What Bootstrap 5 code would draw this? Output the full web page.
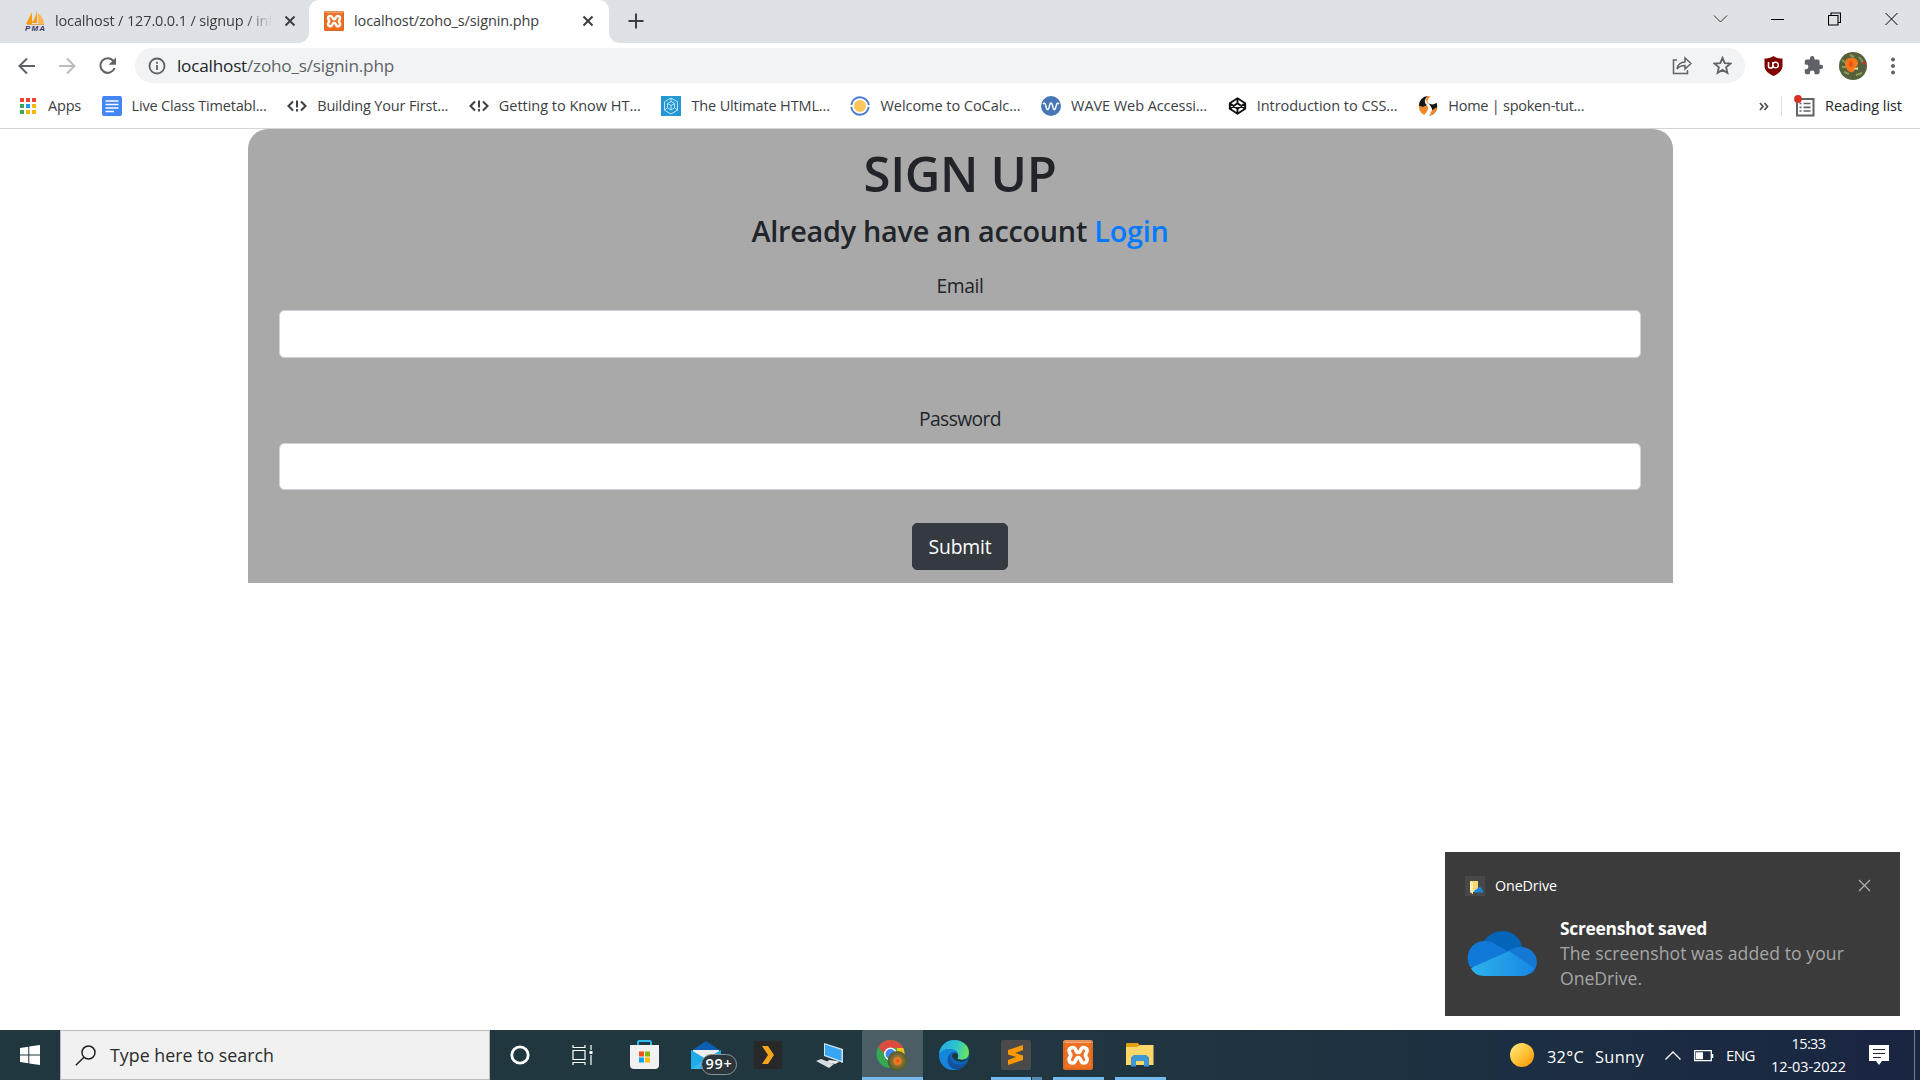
<!DOCTYPE html>
<html lang="en">
<head>
<meta charset="utf-8">
<title>localhost/zoho_s/signin.php</title>
<link href="https://cdn.jsdelivr.net/npm/bootstrap@5.3.0/dist/css/bootstrap.min.css" rel="stylesheet">
<style>
body{width:1920px;height:1080px;overflow:hidden;font-family:"Open Sans","Noto Sans",sans-serif;color:#212529;background:#fff;margin:0}
svg{display:block;flex:none}
[data-w]{display:inline-block;white-space:nowrap;flex:none}
.tabstrip{height:43px;background:#dee1e6;font-size:14.5px;color:#3c4043}
.tab-idle{width:309px;padding:0 0 2px 25px}
.tab-idle .title{width:218px;overflow:hidden;-webkit-mask-image:linear-gradient(90deg,#000 190px,transparent 218px);mask-image:linear-gradient(90deg,#000 190px,transparent 218px)}
.tab-live{width:300px;background:#fff;border-radius:10px 10px 0 0;padding:0 0 2px 15px}
.tab-live::before,.tab-live::after{content:"";position:absolute;bottom:0;width:10px;height:10px}
.tab-live::before{left:-10px;background:radial-gradient(circle at 0 0,transparent 9.5px,#fff 10px)}
.tab-live::after{right:-10px;background:radial-gradient(circle at 100% 0,transparent 9.5px,#fff 10px)}
.new-tab{margin:0 0 1px 17px}
.winbtns{padding:0 0 5px 0}
.winbtn{width:57px}
.toolbar{height:47px;padding:0 0 2px 7px}
.navslot{width:40px}
.omnibox{height:35px;width:1610px;border-radius:18px;background:#f1f3f4;font-size:17.2px;color:#5f6368;padding:0 3px 0 13px}
.bookmarks{height:39px;border-bottom:1px solid #d3d5d8;font-size:14.5px;color:#3c4043;padding:0 18px 6px}
.bm{gap:10px;margin-right:20.6px}
.signup{width:1425px;height:454px;background:#a9a9a9;border-radius:20px 20px 0 0;padding:0 32px 0 31px;margin-left:248px;font-size:19.3px}
.signup h1{font-size:49px;font-weight:600;line-height:60px;margin:14px 0 10px}
.signup h4{font-size:28.8px;font-weight:600;line-height:36px;margin:0 0 22px}
.signup h4 a{color:#007bff;text-decoration:none}
.signup label{line-height:30px;margin-bottom:9px}
.signup .form-control{height:48px;border:1px solid #ced4da;border-radius:5px}
.signup .form-control[type=password]{height:47px}
.signup .btn{width:96px;height:47px;background:#343a40;border-color:#343a40;color:#fff;border-radius:5px;font-size:19.3px;padding:1px 0 0}
.toast-box{left:1445px;top:852px;width:455px;height:164px;background:#3b3b3b;padding:23px 29px 0 20px;color:#fff}
.toast-body-text{font-size:17.6px;line-height:25px;color:#a6a6a6}
.taskbar{left:0;top:1030px;width:1920px;height:50px;background:linear-gradient(90deg,#20373f 0,#21373f 45%,#203540 62%,#1c2e42 80%,#1a2541 100%);color:#fff}
.searchbox{width:430px;background:#f1f1f1;border:1px solid #bbb;color:#2b2b2b;font-size:17.8px;padding-left:14px;gap:15px}
.app{width:62px;height:50px;padding-right:2px}
.app.on{background:#4b5e66;width:61px;margin-right:1px;padding-left:1px}
.bar{position:absolute;bottom:0;height:3px;background:#76b9ed;left:5px;width:51px}
.app.on .bar{left:0;width:61px}
.mailbadge{left:25px;top:24px;width:36px;height:21px;border:1px solid #8b9499;border-radius:11px;background:#2b363b;font-size:14.5px;line-height:18px;font-weight:600}
.tray{font-size:15px}
</style>
<script src="https://cdn.jsdelivr.net/npm/bootstrap@5.3.0/dist/js/bootstrap.bundle.min.js"></script>
</head>
<body>
<svg width="0" height="0" class="position-absolute">
<defs>
<linearGradient id="sun" x1="0" y1="0" x2="1" y2="1"><stop offset="0" stop-color="#ffec86"/><stop offset=".5" stop-color="#ffc538"/><stop offset="1" stop-color="#ff8c00"/></linearGradient>
<linearGradient id="cl" x1="0" x2="1"><stop offset="0" stop-color="#2eb2ee"/><stop offset="1" stop-color="#1689e3"/></linearGradient>
<linearGradient id="eg" x1="0" y1=".3" x2="1" y2=".5"><stop offset="0" stop-color="#2aa8e0"/><stop offset=".55" stop-color="#2cc5cf"/><stop offset="1" stop-color="#6be457"/></linearGradient>
<radialGradient id="flower"><stop offset="0" stop-color="#e8491d"/><stop offset=".3" stop-color="#f4811c"/><stop offset=".5" stop-color="#8a7034"/><stop offset="1" stop-color="#4c5a2e"/></radialGradient>
<clipPath id="disc"><ellipse cx="10" cy="10" rx="9.300" ry="10"/></clipPath>
<symbol id="xampp" viewBox="0 0 30 30"><rect width="30" height="30" rx="2.500" fill="#ed7023"/><path d="M0 3a3 3 0 0 1 3-3h24a3 3 0 0 1 3 3z" fill="#f7a878"/><path d="M1 1h28v28H1z" fill="none" stroke="#b85a1d" stroke-width="1" opacity=".6"/><path d="M10 7.500c-3 0-4.200 2-3.700 4 .3 1.500 1.500 2.300 1.500 3.700s-1.400 2.200-1.700 4c-.4 2.400 1.400 4 3.700 3.800 3.500-.2 2.200-5.500 5.400-5.500s2 5.300 5.200 5.500c2.300.2 4.100-1.600 3.700-3.800-.3-1.800-1.700-2.600-1.700-4s1.200-2.200 1.500-3.700c.5-2-.7-4-3.500-4-3.500 0-2 5-5.200 5S13.500 7.500 10 7.500z" fill="none" stroke="#fff" stroke-width="3.700"/></symbol>
<symbol id="code" viewBox="0 0 20 16"><path d="M6 3.500 1.500 8 6 12.500M14 3.500 18.500 8 14 12.500" fill="none" stroke="#3f4247" stroke-width="2.100"/><path d="M10 2.500v7M10 11v2.400" stroke="#3f4247" stroke-width="2"/></symbol>
<symbol id="cross" viewBox="0 0 12 12"><path d="M1.500 1.500l9 9M10.500 1.500l-9 9" stroke="#3c4043" stroke-width="2" fill="none"/></symbol>
</defs>
</svg>

<header>
<div class="tabstrip d-flex">
  <div class="tab-idle d-flex align-items-center">
    <svg width="21" height="21" viewBox="0 0 21 21"><path d="M7 2v12H1zM12 0v13H6.500C10 9 11 5 12 0z" fill="#f89c0e"/><path d="M13 3c4 3 6 7 6 11h-6z" fill="#fbb858"/><path d="M2 14.500h17" stroke="#e1a65a"/><text x="0" y="20.500" font-size="8" font-weight="bold" font-style="italic" fill="#3b3968" textLength="20" font-family="Liberation Sans">PMA</text></svg>
    <div class="title" style="margin-left:9px"><span data-w="218">localhost / 127.0.0.1 / signup / inf</span></div>
    <svg class="ms-auto" width="12" height="12" style="margin-right:13px"><use href="#cross"/></svg>
  </div>
  <div class="tab-live d-flex align-items-center position-relative">
    <svg width="20" height="20"><use href="#xampp"/></svg>
    <span data-w="185" style="margin-left:10px">localhost/zoho_s/signin.php</span>
    <svg class="ms-auto" width="12" height="12" style="margin-right:15px"><use href="#cross"/></svg>
  </div>
  <svg class="new-tab align-self-center" width="20" height="16" viewBox="0 0 16 16"><path d="M8 .5v15M.5 8h15" stroke="#3c4043" stroke-width="2"/></svg>
  <div class="winbtns d-flex align-items-center ms-auto">
    <div class="winbtn"><svg class="mx-auto" width="15" height="14" viewBox="0 0 15 14"><path d="M1 3.500l6.500 6.500L14 3.500" fill="none" stroke="#333"/></svg></div>
    <div class="winbtn"><svg class="mx-auto" width="13" height="14"><path d="M0 7.500h13" stroke="#000"/></svg></div>
    <div class="winbtn"><svg class="mx-auto" width="13" height="14"><path d="M.5 3.500h9.500v9.500H.5zM3 3.500V1h9.500v9.500H10" fill="none" stroke="#000" stroke-width="1.100"/></svg></div>
    <div class="winbtn"><svg class="mx-auto" width="13" height="14"><path d="M.5 1l12 12M12.500 1l-12 12" stroke="#000"/></svg></div>
  </div>
</div>
<div class="toolbar d-flex align-items-center">
  <div class="navslot"><svg class="mx-auto" width="18" height="18" viewBox="0 0 18 18" fill="none" stroke="#5f6368" stroke-width="2"><path d="M17 9H2M9 1.500 1.500 9 9 16.500"/></svg></div>
  <div class="navslot"><svg class="mx-auto" width="18" height="18" viewBox="0 0 18 18" fill="none" stroke="#babcbe" stroke-width="2"><path d="M1 9h15M9 1.500 16.500 9 9 16.500"/></svg></div>
  <div class="navslot"><svg class="mx-auto" width="19" height="18" viewBox="0 0 19 18"><path d="M15.500 4A7.300 7.300 0 1 0 16.600 11" fill="none" stroke="#5f6368" stroke-width="2.100"/><path d="M18 .5v7.300h-7.300z" fill="#5f6368"/></svg></div>
  <div class="omnibox d-flex align-items-center" style="margin-left:8px">
    <svg width="18" height="18" fill="none" stroke="#5f6368" stroke-width="1.800"><circle cx="9" cy="9" r="7.500"/><path d="M9 8v5M9 4.800v2"/></svg>
    <span data-w="217" style="margin-left:11px"><span class="text-dark">localhost</span>/zoho_s/signin.php</span>
    <div class="navslot ms-auto"><svg class="mx-auto" width="20" height="19" viewBox="0 0 20 19" fill="none" stroke="#5f6368" stroke-width="1.500"><path d="M5 4H1.500v13.500h14V14"/><path d="M5 13C6 8 9 6 13 6V2l6 5.500-6 5.500V9.500c-4 0-6 1-8 3.500z"/></svg></div>
    <div class="navslot"><svg class="mx-auto" width="19" height="19" viewBox="0 0 19 19"><path d="M9.500 1.800l2.200 5.300 5.700.5-4.300 3.700 1.300 5.600-4.900-3-4.900 3 1.300-5.600L1.600 7.600l5.700-.5z" fill="none" stroke="#5f6368" stroke-width="1.800"/></svg></div>
  </div>
  <div class="navslot ms-2"><svg class="mx-auto" width="19" height="20" viewBox="0 0 19 20"><path d="M9.500 0c3 2 6 2.600 9 2.600V10c0 5-5 8-9 10C5.500 18 .5 15 .5 10V2.600C3.500 2.600 6.500 2 9.500 0z" fill="#800000"/><path d="M4.500 6v4.200c0 2.500 4.300 2.500 4.300 0V6M8.800 9a2.800 2.800 0 1 0 2.700-2.800A2.800 2.800 0 0 0 8.800 9z" fill="none" stroke="#fff" stroke-width="1.500"/></svg></div>
  <div class="navslot"><svg class="mx-auto" width="21" height="21" viewBox="0 0 24 24"><path fill="#5f6368" d="M20.500 11H19V7a2 2 0 0 0-2-2h-4V3.500a2.500 2.500 0 0 0-5 0V5H4a2 2 0 0 0-2 2v3.800h1.500a2.700 2.700 0 0 1 0 5.400H2V20a2 2 0 0 0 2 2h3.800v-1.500a2.700 2.700 0 0 1 5.400 0V22H17a2 2 0 0 0 2-2v-4h1.500a2.500 2.500 0 0 0 0-5z"/></svg></div>
  <div class="navslot"><svg class="mx-auto" width="28" height="28" viewBox="0 0 28 28"><circle cx="14" cy="14" r="14" fill="#54613a"/><path d="M3 8l4 3M5 20l5 2M17 23l6-2M20 5l4 5M11 3l4 2M3 15h4" stroke="#8c9a62" stroke-width="2"/><path d="M7 8c2-3 9-3 11 0 2 3 1 5-1 7-1 4-3 6-6 5-5-3-6-8-4-12z" fill="#f5761a"/><path d="M10 10c2-2 5 0 4 3s-4 2-4 0z" fill="#e8551a"/><path d="M14 17l5-2v3z" fill="#e6d5a0"/><circle cx="25" cy="11" r="1.500" fill="#d42c20"/></svg></div>
  <div class="navslot"><svg class="mx-auto" width="4" height="18" fill="#5f6368"><circle cx="2" cy="2.500" r="2"/><circle cx="2" cy="9" r="2"/><circle cx="2" cy="15.500" r="2"/></svg></div>
</div>
<div class="bookmarks d-flex align-items-center">
  <div class="bm d-flex align-items-center"><svg width="20" height="18"><g fill="#ea4335"><path d="M2 1h4v4H2zM8 1h4v4H8zM14 1h4v4h-4z"/></g><path d="M2 7h4v4H2zM2 13h4v4H2z" fill="#34a853"/><path d="M8 7h4v4H8z" fill="#1a9bf0"/><path d="M14 7h4v4h-4zM14 13h4v4h-4zM8 13h4v4H8z" fill="#fbb505"/></svg><span data-w="33">Apps</span></div>
  <div class="bm d-flex align-items-center"><svg width="20" height="20"><rect width="20" height="20" rx="2" fill="#4285f4"/><path d="M3.500 5h13M3.500 8.500h13M3.500 12h13M3.500 15.500h8.500" stroke="#fff" stroke-width="1.700"/></svg><span data-w="135">Live Class Timetabl...</span></div>
  <div class="bm d-flex align-items-center"><svg width="20" height="16"><use href="#code"/></svg><span data-w="131">Building Your First...</span></div>
  <div class="bm d-flex align-items-center"><svg width="20" height="16"><use href="#code"/></svg><span data-w="142">Getting to Know HT...</span></div>
  <div class="bm d-flex align-items-center"><svg width="20" height="20"><path d="M0 0h20v20H0z" fill="#2497d5"/><path d="M10 2l6.500 3.800v8.400L10 18l-6.500-3.800V5.800zM10 5.500l3.500 2v4.200L10 14l-3.500-2.300V7.500zM6.500 7.500l3.500 2 3.500-2M10 9.500V14M3.500 14.200l3-2.500M16.500 14.200l-3-2.500M10 2v3.500" fill="none" stroke="#bfe5f8"/></svg><span data-w="138.500">The Ultimate HTML...</span></div>
  <div class="bm d-flex align-items-center"><svg width="20" height="20"><circle cx="10" cy="10" r="8.800" fill="none" stroke="#4b7bd0" stroke-width="1.900" stroke-dasharray="25.600 2" stroke-dashoffset="-1"/><circle cx="10" cy="10" r="6" fill="#fbc55b"/></svg><span data-w="140">Welcome to CoCalc...</span></div>
  <div class="bm d-flex align-items-center"><svg width="20" height="20"><circle cx="10" cy="10" r="10" fill="#4776b4"/><path d="M2 8c2-2 2.500 0 3 2.500s1.700 5 3 1l.8-3c.6-2 1.800-2 2.400 0l.8 3c1.300 4 2.500 1.500 3-1s1-4.500 3-2.500" fill="none" stroke="#fff" stroke-width="1.400"/></svg><span data-w="136">WAVE Web Accessi...</span></div>
  <div class="bm d-flex align-items-center"><svg width="19" height="18" viewBox="0 0 18 18" fill="none" stroke="#111" stroke-width="1.900" stroke-linejoin="round"><path d="M9 1.200l7.700 5v5.600l-7.700 5-7.700-5V6.200zM9 1.200v5M9 11.800v5M1.300 6.200 9 11.800l7.700-5.600M1.300 11.800 9 6.200l7.700 5.600"/></svg><span data-w="141">Introduction to CSS...</span></div>
  <div class="bm d-flex align-items-center"><svg width="20" height="20"><g clip-path="url(#disc)"><path d="M0 0h20v20H0z" fill="#fff"/><path d="M0 0h10C6 3 6 7 9 9c-3 3-7 2-9 0z" fill="#171615"/><path d="M10 0h4c-4 2-5 4-4 8-2-2-3-5 0-8zM0 9c4 3 7 2 9 0 2 3 1 6-3 10H0z" fill="#f0882a"/><path d="M10 7c3 2 6 2 10-1v14H11c5-3 4-8-1-13z" fill="#171615"/><path d="M12 20c0-4 2-7 8-9v5z" fill="#f0882a"/></g></svg><span data-w="136">Home | spoken-tut...</span></div>
  <div class="d-flex align-items-center ms-auto">
    <svg width="10" height="9" fill="none" stroke="#4b4e52" stroke-width="1.700"><path d="M1 1l3 3.500L1 8M5.500 1l3 3.500-3 3.500"/></svg>
    <div class="border-start" style="height:20px;margin:0 12px 0 12px;"></div>
    <svg width="21" height="23" viewBox="0 0 21 23"><path d="M3 4h16.500v16.500H3z" fill="none" stroke="#5f6368" stroke-width="2"/><path d="M5.500 8.500h2M9.500 8.500h7M5.500 12.300h2M9.500 12.300h7M5.500 16h2M9.500 16h7" stroke="#5f6368" stroke-width="1.700"/><circle cx="4" cy="4" r="3.900" fill="#d93025"/></svg>
    <span data-w="77" class="text-dark" style="margin-left:10px">Reading list</span>
  </div>
</div>
</header>

<main>
<form class="signup text-center d-flex flex-column align-items-center">
  <h1><span data-w="193">SIGN UP</span></h1>
  <h4><span data-w="417">Already have an account <a href="#">Login</a></span></h4>
  <label for="em"><span data-w="47">Email</span></label>
  <input id="em" type="email" class="form-control">
  <label for="pw" style="margin-top:46px"><span data-w="82">Password</span></label>
  <input id="pw" type="password" class="form-control">
  <button type="button" class="btn" style="margin-top:33px"><span data-w="63">Submit</span></button>
</form>
</main>

<aside class="toast-box position-absolute">
  <div class="d-flex align-items-center">
    <svg width="20" height="20"><path d="M0 0h20v20H0z" fill="#484848"/><path d="M5 5h8v11H7l1 2-3-2z" fill="#f8d775"/><path d="M5 5l3 2v11l-3-2z" fill="#fff0b0"/><path d="M9 16.500c0-3 3-3 3.500-4 2-3 4-1 4.500 1 2 1 1 3 0 3z" fill="#1788dc"/></svg>
    <span data-w="62" style="font-size:14.300px;margin-left:10px">OneDrive</span>
    <svg class="ms-auto" width="13" height="13"><path d="M1 1l11 11M12 1L1 12" stroke="#b0b0b0" stroke-width="1.200"/></svg>
  </div>
  <div class="d-flex" style="margin-top:20px">
    <svg width="70" height="46" viewBox="0 0 70 46" style="margin:15px 23px 0 2px"><path d="M17 10C27-5 51-3 55 16L39 29z" fill="#0364b8"/><path d="M3 36C-4 22 6 9 19 10c5 0 8 2 11 4l23 14-17 12z" fill="#1079d8"/><path d="M40 21c5-4 9-5 15-5 17 2 19 21 8 27z" fill="#1478d4"/><path d="M4 37L42 20l25 17c-2 4-6 8-12 8H17C11 45 6 42 4 37z" fill="url(#cl)"/></svg>
    <div>
      <div class="fw-bold" style="font-size:17.400px;line-height:25px;"><span data-w="147">Screenshot saved</span></div>
      <div class="toast-body-text"><span data-w="284">The screenshot was added to your</span><br><span data-w="82">OneDrive.</span></div>
    </div>
  </div>
</aside>

<footer class="taskbar position-absolute d-flex">
  <div class="d-flex align-items-center justify-content-center" style="width:60px"><svg width="20" height="20" fill="#fff"><path d="M0 3l8.300-1.300v7.800H0zM9.300 1.500L20 0v9.500H9.300zM0 10.500h8.300v7.800L0 17zM9.300 10.500H20V20L9.300 18.500z"/></svg></div>
  <div class="searchbox d-flex align-items-center"><svg width="21" height="21" fill="none" stroke="#222" stroke-width="1.500"><circle cx="13.500" cy="7.500" r="6.500"/><path d="M9 12.200L.8 20.300"/></svg><span data-w="164" style="margin-left:-1px">Type here to search</span></div>
  <div class="d-flex flex-shrink-0">
    <div class="app d-flex align-items-center justify-content-center"><svg width="20" height="20"><circle cx="10" cy="10" r="8.200" fill="none" stroke="#fff" stroke-width="2.800"/></svg></div>
    <div class="app d-flex align-items-center justify-content-center"><svg width="21" height="20" fill="none" stroke="#fff" stroke-width="1.200"><path d="M1 5.500h12v9H1zM1 0v2.500h12V0M1 20v-2.500h12V20M19 0v5M19 10v10"/><path d="M17.500 6h3v3h-3z" fill="#fff" stroke="none"/></svg></div>
    <div class="app d-flex align-items-center justify-content-center"><svg width="29" height="30"><path d="M8 8V2.500c0-1 0-1.500 1-1.500h11c1 0 1 .5 1 1.500V8" fill="none" stroke="#2ebcf0" stroke-width="2"/><path d="M0 5h29v20a4 4 0 0 1-4 4H4a4 4 0 0 1-4-4z" fill="#f1f1f1"/><path d="M9 11.500h5v5H9z" fill="#f25022"/><path d="M15 11.500h5v5h-5z" fill="#7fba00"/><path d="M9 17.500h5v5H9z" fill="#00a4ef"/><path d="M15 17.500h5v5h-5z" fill="#ffb900"/></svg></div>
    <div class="app position-relative d-flex align-items-center justify-content-center"><svg width="30" height="29"><path d="M0 10L15 0l15 10v5H0z" fill="#0c5eb1"/><path d="M2 9h26v9H2z" fill="#eee"/><path d="M0 9l15 9L30 9v19H0z" fill="#1faae8"/><path d="M0 28l15-10 15 10z" fill="#38b8ef"/></svg><div class="mailbadge position-absolute text-center"><span data-w="27">99+</span></div></div>
    <div class="app d-flex align-items-center justify-content-center"><svg width="28" height="28"><path d="M0 0h28v28H0z" fill="#282828"/><path d="M8 5h6l6 9-6 9H8l6-9z" fill="#f5a51b"/></svg></div>
    <div class="app d-flex align-items-center justify-content-center"><svg width="28" height="27"><path d="M8 1l19 6v14L8 14z" fill="#d3e1e9"/><path d="M9 2.500l16.500 5.500v11L9 13z" fill="#38a6f4"/><path d="M13 18l8 1 2 1-4 2-8-2z" fill="#eee"/><path d="M0 19l5-2 13 5-5 4z" fill="#d9dcde"/></svg></div>
    <div class="app on position-relative d-flex align-items-center justify-content-center"><svg width="32" height="32" viewBox="0 0 32 32"><circle cx="14.500" cy="15" r="14" fill="#34a853"/><path d="M2.400 8A14 14 0 0 1 27.200 9H14.500l-6 6z" fill="#dd4b3e"/><path d="M27.200 9A14 14 0 0 1 14 29l7-10V9z" fill="#fbc116"/><circle cx="14.500" cy="15" r="6.500" fill="#fff"/><circle cx="14.500" cy="15" r="5" fill="#4285f4"/><circle cx="21.500" cy="22" r="10" fill="url(#flower)"/></svg><div class="bar"></div></div>
    <div class="app d-flex align-items-center justify-content-center"><svg width="30" height="30" viewBox="0 0 30 30"><circle cx="15" cy="15" r="15" fill="#0c67bd"/><path d="M0 14C1 5 8 0 15 0c9 0 15 6 15 12 0 7-6 9-11 7-1-1 1-2 0-5C17 8 6 7 0 14z" fill="url(#eg)"/><path d="M0 15c5-8 14-7 17-3-6-1-9 4-7 9 1 4 4 7 8 8.700C6 32 0 23 0 15z" fill="#1686d9"/><path d="M12 14c-4 6 5 15 16 8-3 6-8 8-11 7.800C8 28 6 18 12 14z" fill="#12519e"/><path d="M29.500 18c-2 3-7 5-11 3-4-1-5-4-4-6 2 4 8 7 15 3z" fill="#203540"/><circle cx="16" cy="16" r="3" fill="#203540"/></svg></div>
    <div class="app position-relative d-flex align-items-center justify-content-center"><svg width="30" height="30"><rect width="30" height="30" rx="2" fill="#4a4a4a"/><path d="M7 10l15-5v5l-8 3 8 2.500V20L7 25v-5l8-3-8-2.500z" fill="#ff9800"/></svg><div class="bar" style="width:40px"></div><div class="bar" style="left:46px;width:10px;background:#5589b4"></div></div>
    <div class="app position-relative d-flex align-items-center justify-content-center"><svg width="30" height="30"><use href="#xampp"/></svg><div class="bar"></div></div>
    <div class="app position-relative d-flex align-items-center justify-content-center"><svg width="28" height="24"><path d="M0 1.500C0 .5.500 0 1.500 0H12l2 3v5H0z" fill="#e2a20f"/><path d="M0 4h11l3-2h13.500v20H0z" fill="#ffd768"/><path d="M5 23.500v-9l3-2.500h12l3 2.500v9h-5V18h-8v5.500z" fill="#3f97d6"/></svg><div class="bar"></div></div>
  </div>
  <div class="tray d-flex align-items-center ms-auto">
    <svg width="24" height="24" style="margin-right:13px"><circle cx="12" cy="12" r="12" fill="url(#sun)"/></svg>
    <div class="d-flex mt-1" style="font-size:16.300px;width:118px;gap:11px"><span data-w="37">32°C</span><span data-w="49">Sunny</span></div>
    <svg width="16" height="9"><path d="M.5 8.500L8 1l7.500 7.500" fill="none" stroke="#fff" stroke-width="1.300"/></svg>
    <svg width="20" height="12" style="margin:2px 12px 0 13px"><path d="M.7.7h16.600v10H.7z" fill="none" stroke="#fff" stroke-width="1.300"/><path d="M2 2.200h7v7H2zM18 4h1.300v4H18z" fill="#fff"/></svg>
    <span data-w="29" style="margin:0 16px 0 0;">ENG</span>
    <div class="d-flex flex-column align-items-center" style="width:75px;line-height:23px;font-size:14.500px"><span data-w="34">15:33</span><span data-w="75">12-03-2022</span></div>
    <svg width="20" height="20" style="margin:0 25px 0 23px"><path d="M0 0h20v16h-7l-3 4-3-4H0z" fill="#fff"/><path d="M4 4.500h12M4 8.500h12M4 12.500h8" stroke="#1b2941" stroke-width="1.200"/></svg>
    <div style="width:1px;height:50px;background:#75808f;margin-right:5px"></div>
  </div>
</footer>
<script>
// Track each label so that it occupies its declared width
document.querySelectorAll('[data-w]').forEach(el => {
  const goal = +el.dataset.w, n = el.textContent.length;
  el.style.letterSpacing = (goal - el.getBoundingClientRect().width) / n + 'px';
  el.style.width = goal + 'px';
});
</script>
</body>
</html>
